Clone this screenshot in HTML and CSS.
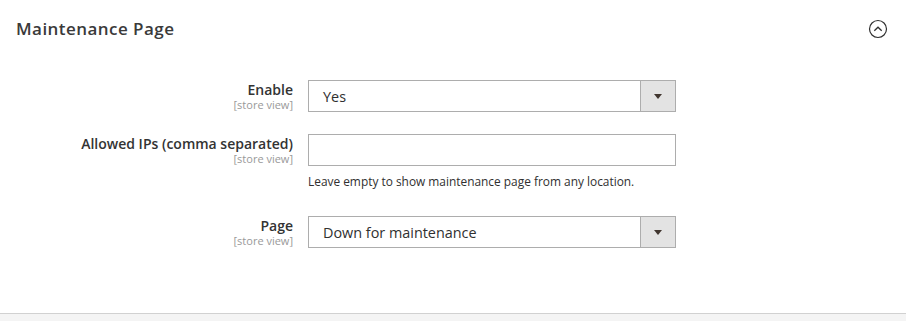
FILE: index.html
```html
<!DOCTYPE html>
<html>
<head>
<meta charset="utf-8">
<link rel="stylesheet" href="styles.css">
</head>
<body>
<div class="section">
  <div class="head">
    <span class="title">Maintenance Page</span>
    <svg class="toggle" width="20" height="20" viewBox="0 0 20 20"><circle cx="10" cy="10" r="8.5" fill="none" stroke="#303030" stroke-width="1.2"/><path d="M6.3 11.8 L10 8.2 L13.7 11.8" fill="none" stroke="#303030" stroke-width="1.3"/></svg>
  </div>
  <div class="rows">
    <div class="row">
      <div class="label"><span class="name">Enable</span><span class="scope">[store view]</span></div>
      <div class="field">
        <div class="select"><span class="val">Yes</span><span class="btn"><span class="tri"></span></span></div>
      </div>
    </div>
    <div class="row">
      <div class="label"><span class="name">Allowed IPs (comma separated)</span><span class="scope">[store view]</span></div>
      <div class="field">
        <div class="input"></div>
        <div class="note">Leave empty to show maintenance page from any location.</div>
      </div>
    </div>
    <div class="row">
      <div class="label"><span class="name">Page</span><span class="scope">[store view]</span></div>
      <div class="field">
        <div class="select"><span class="val">Down for maintenance</span><span class="btn"><span class="tri"></span></span></div>
      </div>
    </div>
  </div>
</div>
<div class="footer"></div>
</body>
</html>
```
FILE: styles.css
```css
html, body { margin: 0; padding: 0; background: #fff; }
body { font-family: "Open Sans", sans-serif; color: #303030; width: 906px; height: 321px; overflow: hidden; }
.section { height: 313px; box-sizing: border-box; }
.head { display: flex; align-items: center; justify-content: space-between; height: 56px; padding: 0 19px 0 16px; }
.title { font-size: 17px; font-weight: 600; letter-spacing: 0.45px; color: #3a3a3a; }
.toggle { display: block; margin-top: 2px; margin-right: -1px; }
.rows { padding-top: 24px; display: flex; flex-direction: column; gap: 22px; }
.row { display: flex; }
.label { width: 293px; display: flex; flex-direction: column; align-items: flex-end; padding-right: 15px; }
.name { font-size: 14px; font-weight: 600; line-height: 17px; margin-top: 1px; color: #333; }
.scope { font-size: 11px; line-height: 13px; color: #999; }
.field { width: 368px; }
.select, .input { box-sizing: border-box; height: 32px; border: 1px solid #adadad; background: #fff; display: flex; }
.val { flex: 1; font-size: 14.4px; line-height: 32px; padding-left: 14px; color: #303030; }
.btn { width: 34px; border-left: 1px solid #adadad; background: #e3e3e3; display: flex; align-items: center; justify-content: center; }
.tri { width: 0; height: 0; border-left: 4.5px solid transparent; border-right: 4.5px solid transparent; border-top: 5px solid #41362f; }
.note { font-size: 11.9px; line-height: 16px; margin-top: 7px; margin-bottom: 5px; color: #303030; }
.footer { height: 8px; border-top: 1px solid #d1d1d1; background: #f4f4f4; }
```
